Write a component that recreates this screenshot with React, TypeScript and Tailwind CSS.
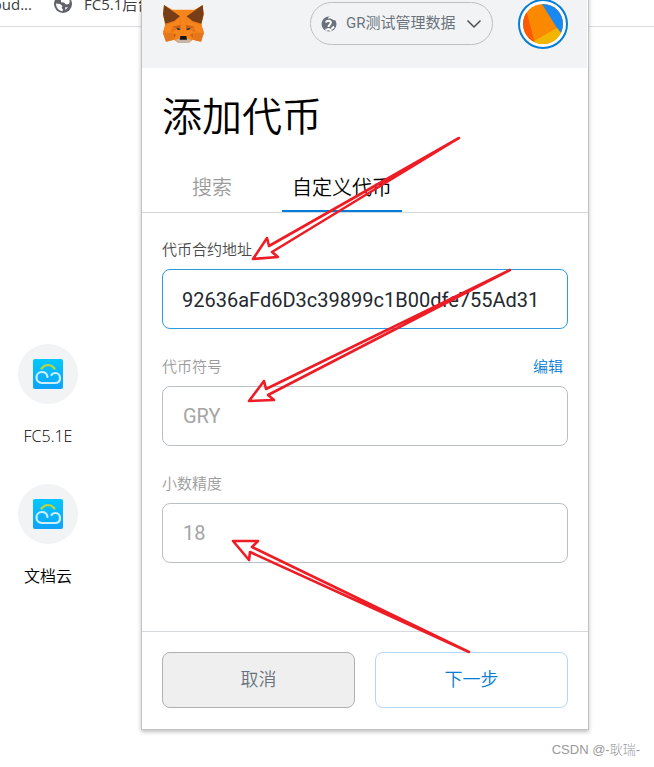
import { useState } from "react";

const SANS = "font-['Open_Sans','Noto_Sans_CJK_SC',sans-serif]";
const ROBOTO = "font-['Roboto','Noto_Sans_CJK_SC',sans-serif]";

const shortcuts = ["FC5.1E", "文档云"];

function Globe() {
  return (
    <svg width="18" height="18" viewBox="0 0 18 18">
      <circle cx="9" cy="9" r="9" fill="#5f6368" />
      <path fill="#fff" d="M10 1.800l-.5 2.200L7 5v2.200l3 .3 2 2 3-.5.800-2.500C15.500 4 13 2 10 1.800zM2 8.500l4 .5 2.500 2-1 2 1.500 1.200-.5 2C5 15.800 2 13 2 8.500zM11 12.500l3-.5-2.500 3z" />
    </svg>
  );
}

function Fox() {
  return (
    <svg width="42" height="40" viewBox="486 9 126 120" aria-label="MetaMask">
      <path
        fill="#f6851b"
        d="M492 12l25 14h66l25-14 3 28-7 34 8 22-9 26-25-6-12 10h-31l-13-10-24 6-9-26 7-22-7-34z"
      />
      <path fill="#e4761b" d="M540 46l4 28-26 20h-29l7-24 26-10zM560 46l-4 28 26 20h29l-7-24-26-10z" />
      <path fill="#f6851b" d="M496 72l28-10 16-14 2 24-24 6-6 16h-20zM604 72l-28-10-16-14-2 24 24 6 6 16h20z" />
      <path fill="#e4761b" d="M489 96h29l4 20-24 6zM611 96h-29l-4 20 25 6z" />
      <path fill="#cd6116" d="M517 77l24-5 1 16-12-6zM583 77l-24-5-1 16 12-6zM520 97l10 4-8 10zM580 97l-10 4 8 10z" />
      <path fill="#763d16" d="M492 12l48 34-18 14-26 8-7-28zM608 12l-48 34 18 14 26 8 7-28z" />
      <path fill="#233447" d="M529 80l11 3-1 5-7-2zM571 80l-11 3 1 5 7-2z" />
      <path fill="#c9b3a5" d="M526 117l14-5h20l14 5-8 9h-31z" />
      <path fill="#161616" d="M541 105h18l2 11h-22z" />
    </svg>
  );
}

function CloudIcon() {
  return (
    <svg width="30" height="30" viewBox="0 0 30 30" fill="none" strokeLinecap="round" strokeWidth="2.2">
      <defs>
        <linearGradient id="sky" x1="0" y1="0" x2="0" y2="1">
          <stop offset="0" stopColor="#02c8ff" />
          <stop offset="1" stopColor="#0fa2fb" />
        </linearGradient>
      </defs>
      <rect width="30" height="30" rx="2" fill="url(#sky)" />
      <path stroke="#bcd63a" d="M8.500 9.500C12 4.800 18 4.800 21.500 9.500" />
      <path
        stroke="#c9efff"
        d="M14.500 18C14 15 12 13 9 13c-3.500 0-5.500 2.800-5.500 5.500S5.500 24 9 24h13c3 0 5-2 5-5s-2-5-4.500-5c-2 0-3.500 1-4 2"
      />
    </svg>
  );
}

function NetworkIcon() {
  return (
    <svg width="16" height="16" viewBox="0 0 16 16" fill="none" stroke="#fff">
      <circle cx="8" cy="8" r="7.500" fill="#6a737d" stroke="none" />
      <path fill="#fff" stroke="none" d="M8 .500c3 0 5.500 1.500 6.800 4L12.500 4 10 2.500 7 2.500z" />
      <path strokeWidth="2" d="M5 6.500C5.500 4 9.800 4 9.800 6.500S7.500 8.500 7.500 11" />
      <path strokeWidth="2" d="M4.500 14l3-1 3 1.500M13 10.500l-2.500 2.500" />
    </svg>
  );
}

function Avatar() {
  return (
    <button
      aria-label="账户"
      className="size-[50px] shrink-0 rounded-full border-2 border-[#037dd6] bg-white p-[3px]"
    >
      <svg viewBox="0 0 40 40" className="size-full rounded-full">
        <rect width="40" height="40" fill="#fa8900" />
        <path fill="#1888f2" d="M19 0h21v31L34 24z" />
        <path fill="#f2b602" d="M11 37L34 24l6 8v8H11z" />
        <path fill="#fb5a03" d="M4 9l8 31H0V9z" />
      </svg>
    </button>
  );
}

function Arrows() {
  return (
    <svg
      className="pointer-events-none absolute left-0 top-0"
      width="654"
      height="767"
      fill="none"
      stroke="#ee1c24"
      strokeWidth="2.6"
      strokeLinecap="round"
      strokeLinejoin="round"
    >
      <path d="M459 138L269 246l-2-8-14 21 25-2-6-5z" />
      <path d="M510 270L266 389l-2-8-15 20 25-1-6-5z" />
      <path d="M469 652L252 547l6-6h-25l16 19 1-8z" />
    </svg>
  );
}

export default function App() {
  const [tab, setTab] = useState("custom");
  const [address, setAddress] = useState("92636aFd6D3c39899c1B00dfe755Ad31");

  return (
    <div className={`relative min-h-screen overflow-hidden bg-white text-black ${SANS}`}>
      {/* Bookmarks bar */}
      <nav className="-mt-[18px] flex h-[45px] items-center border-b border-[#dadce0] text-[15px] text-[#3c4043]">
        <a href="#cloud" className="flex w-8 justify-end">
          cloud...
        </a>
        <a href="#fc" className="ml-[22px] flex items-center gap-3 whitespace-nowrap">
          <Globe />
          FC5.1后台
        </a>
      </nav>

      {/* New tab shortcuts */}
      <aside className="mt-[317px] flex w-24 flex-col gap-14">
        {shortcuts.map((name) => (
          <a key={name} href="#open" className="flex flex-col items-center gap-5 text-base font-[350]">
            <span className="flex size-[60px] items-center justify-center rounded-full bg-[#f1f3f4]">
              <CloudIcon />
            </span>
            <span className="h-1 leading-6">{name}</span>
          </a>
        ))}
      </aside>

      {/* Wallet popup */}
      <main
        className={`absolute -top-[22px] left-[141px] right-[65px] border border-[#c4c4c4] bg-white shadow-[0_2px_4px_rgba(0,0,0,0.25)] ${ROBOTO}`}
      >
        <header className="mr-px flex h-[89px] items-center bg-[#f2f3f4] pl-5 pr-[19px]">
          <Fox />
          <div className="ml-auto mr-[25px] flex h-[43px] w-[183px] items-center rounded-full border border-[#bbc0c5] pl-[10px] text-[#6a737d]">
            <NetworkIcon />
            <select
              aria-label="网络"
              className="ml-[9px] w-[116px] appearance-none bg-transparent text-[15px]"
            >
              <option>GR测试管理数据</option>
            </select>
            <svg className="ml-1" width="16" height="10" viewBox="0 0 16 10" fill="none" stroke="#4a4f55" strokeWidth="1.5">
              <path d="M1.500 1.500L8 8l6.500-6.500" />
            </svg>
          </div>
          <Avatar />
        </header>

        <h1 className="mt-[30px] px-5 text-[40px] font-[350] leading-10">添加代币</h1>

        <div role="tablist" className="mt-[38px] flex gap-10 border-b border-[#d6d9dc] px-10 text-xl font-[350] leading-6">
          <button
            role="tab"
            aria-selected={tab === "search"}
            onClick={() => setTab("search")}
            className="border-b-2 border-transparent px-[10px] pb-[10px] text-[#9b9b9b] aria-selected:border-[#037dd6] aria-selected:text-black"
          >
            搜索
          </button>
          <button
            role="tab"
            aria-selected={tab === "custom"}
            onClick={() => setTab("custom")}
            className="border-b-2 border-transparent px-[10px] pb-[10px] text-[#9b9b9b] aria-selected:border-[#037dd6] aria-selected:text-black"
          >
            自定义代币
          </button>
        </div>

        <form className="flex flex-col gap-7 px-5 pb-[68px] pt-[27px] text-[15px] font-[350] leading-5">
          <div className="flex flex-col gap-[9px]">
            <label htmlFor="address" className="text-[#4a4a4a]">
              代币合约地址
            </label>
            <input
              id="address"
              value={address}
              onChange={(e) => setAddress(e.target.value)}
              className="h-[60px] w-full rounded-lg border border-[#2f9ae0] px-[19px] pt-0.5 text-xl font-normal text-[#24292e]"
            />
          </div>
          <div className="flex flex-col gap-[9px]">
            <div className="flex justify-between pr-[5px]">
              <label htmlFor="symbol" className="text-[#9b9b9b]">
                代币符号
              </label>
              <button type="button" className="text-[#037dd6]">
                编辑
              </button>
            </div>
            <input
              id="symbol"
              disabled
              defaultValue="GRY"
              className="h-[60px] w-full rounded-lg border border-[#bbc0c5] px-5 text-xl font-normal text-[#a5a5a5]"
            />
          </div>
          <div className="flex flex-col gap-[9px]">
            <label htmlFor="decimals" className="text-[#9b9b9b]">
              小数精度
            </label>
            <input
              id="decimals"
              disabled
              defaultValue="18"
              className="h-[60px] w-full rounded-lg border border-[#bbc0c5] px-5 text-xl font-normal text-[#a5a5a5]"
            />
          </div>
        </form>

        <footer className="flex gap-5 border-t border-[#d6d9dc] px-5 pb-[21px] pt-5 text-lg font-[350]">
          <button className="h-14 flex-1 rounded-lg border border-[#b0b0b0] bg-[#efefef] text-[#6a737d]">
            取消
          </button>
          <button className="h-14 flex-1 rounded-lg border border-[#b0d7f5] bg-white text-[#037dd6]">
            下一步
          </button>
        </footer>
      </main>

      <p className="absolute right-[14px] top-[740px] font-['Liberation_Sans','Noto_Sans_CJK_SC',sans-serif] text-[13px] font-light text-[#999999]">
        CSDN @-耿瑞-
      </p>

      <Arrows />
    </div>
  );
}
